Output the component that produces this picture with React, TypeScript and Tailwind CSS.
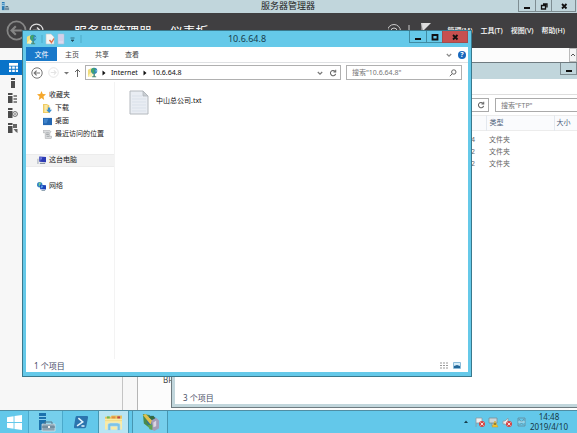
import type { ReactNode } from "react";

const uiFont = "font-['Noto_Sans','Noto_Sans_CJK_SC',sans-serif]";

type GlyphKind = "min" | "max" | "restore" | "close";

function WindowGlyph({ kind }: { kind: GlyphKind }) {
  return (
    <svg viewBox="0 0 10 10" className="h-[10px] w-[10px]" fill="none" stroke="#111" strokeWidth="1.8">
      {kind === "min" && <path d="M2 7H8" strokeWidth="2" />}
      {kind === "max" && <path d="M2.5 3H7.5V7.5H2.5Z" />}
      {kind === "restore" && <path d="M2.5 4.5H6.5V8H2.5ZM4 3H8V6.5" strokeWidth="1.3" />}
      {kind === "close" && <path d="M3 3L7.5 7.5M7.5 3L3 7.5" />}
    </svg>
  );
}

function WindowButton({ kind, label, className }: { kind: GlyphKind; label: string; className: string }) {
  return (
    <button type="button" aria-label={label} className={`flex items-center justify-center border border-t-0 ${className}`}>
      <WindowGlyph kind={kind} />
    </button>
  );
}

function NetIcon() {
  return (
    <svg viewBox="0 0 12 12" className="h-[11px] w-[11px] shrink-0">
      <path d="M1 3L5 1L6 5L4 9L1 11Z" fill="#f0dd7c" />
      <path d="M1 10L4 6L7 7L5 11Z" fill="#faf2b4" />
      <circle cx="7.8" cy="4.2" r="3.4" fill="#2d86b0" />
      <path d="M4.6 3L7 .9L9 2.4L7.4 4.4L8.4 6.6L6 7.2Z" fill="#43a668" />
      <path d="M9.4 2.8L11 4.2L9.6 5.8Z" fill="#8ed0ef" />
      <path d="M7 7.6H8.6V10H10V11.2H5.6V10H7Z" fill="#4d8a74" />
    </svg>
  );
}

function ArrowCircle({ className, color }: { className: string; color: string }) {
  return (
    <svg viewBox="0 0 12 12" className={className} fill="none" stroke={color} strokeWidth="1">
      <circle cx="6" cy="6" r="5.2" />
      <path d="M9 6H3.2M5.6 3.6L3.2 6L5.6 8.4" strokeWidth="1.2" />
    </svg>
  );
}

function RefreshIcon() {
  return (
    <svg viewBox="0 0 10 10" className="h-[8px] w-[8px]" fill="none" stroke="#666" strokeWidth="1.3">
      <path d="M7.6 3A3.3 3.3 0 1 0 8.3 6" />
      <path d="M8.4 .8V3.6H5.6" />
    </svg>
  );
}

function ChevronDown({ color = "#777" }: { color?: string }) {
  return (
    <svg viewBox="0 0 6 6" className="h-[6px] w-[6px]" fill="none" stroke={color} strokeWidth="1.2">
      <path d="M.8 2L3 4.2L5.2 2" />
    </svg>
  );
}

function TriangleRight() {
  return (
    <svg viewBox="0 0 4 6" className="h-[6px] w-[4px]"><path d="M.5 .6L3.5 3L.5 5.4Z" fill="#111" /></svg>
  );
}

function ServerIcon({ detail }: { detail: number }) {
  return (
    <svg viewBox="0 0 12 12" className="h-[12px] w-[12px]" fill="#4c4c4c">
      {detail === 0 && <path d="M4 1H8V3H4ZM4 4H8V11H4Z" />}
      {detail > 0 && <path d="M1 1H5.5V3H1ZM1 4H5.5V11H1Z" />}
      {detail === 1 && <path d="M6.5 3H10V5H6.5ZM6.5 6H10V8H6.5ZM6.5 9H10V11H6.5Z" fill="#888" />}
      {detail === 2 && <><circle cx="8" cy="7" r="2.4" fill="#f7f7f7" stroke="#666" /><circle cx="8" cy="7" r=".8" /></>}
      {detail === 3 && <path d="M6 2H10V6H6ZM6.5 7H10.5V11L8.5 9.5Z" fill="#666" />}
    </svg>
  );
}

function ManagerHeader() {
  return (
    <>
      <header className="flex h-[13px] shrink-0 bg-[#c1d6dc] text-[9px] leading-[12px] text-[#222]">
        <div className="flex-1">
          <svg viewBox="0 0 10 10" className="mt-[2px] ml-[1px] h-[9px] w-[9px]">
            <path d="M1 0H4V9H1Z" fill="#287bb5" /><path d="M1 2H4M1 4H4" stroke="#b9def2" />
            <path d="M4 6H9V9H4Z" fill="#7590a0" /><path d="M5 5H8" stroke="#436479" />
          </svg>
        </div>
        <h1>服务器管理器</h1>
        <div className="flex flex-1 justify-end pr-[1px]">
          <WindowButton kind="min" label="最小化" className="h-[12px] w-[17px] border-r-0 border-[#7e8d92]" />
          <WindowButton kind="restore" label="还原" className="h-[12px] w-[16px] border-r-0 border-[#7e8d92]" />
          <WindowButton kind="close" label="关闭" className="h-[12px] w-[25px] border-[#7e8d92]" />
        </div>
      </header>
      <div className="flex h-[35px] shrink-0 items-center bg-[#403f41] pl-[6px] text-white">
        <ArrowCircle className="h-[21px] w-[21px]" color="#858585" />
        <ArrowCircle className="ml-[2px] h-[15px] w-[15px] rotate-180" color="#ddd" />
        <span className="ml-[3px] h-[2px] w-[5px] bg-[#ddd]" />
        <h2 className="ml-[22px] flex flex-1 gap-[7px] text-[13px] leading-[16px] whitespace-nowrap">
          <span>服务器管理器</span><span>·</span><span>仪表板</span>
        </h2>
        <svg viewBox="0 0 48 16" className="mr-[12px] h-[16px] w-[48px]" fill="none" stroke="#ccc">
          <circle cx="6" cy="8" r="6.5" /><path d="M3 8A3 3 0 0 1 9 8M21 2V14" />
          <path d="M33 0H43L35 8Z" fill="#ddd" stroke="none" /><path d="M34 0V15" />
        </svg>
        <nav className="flex gap-[8px] pr-[12px] text-[7px] leading-[12px] font-medium whitespace-nowrap">
          <button type="button">管理(M)</button>
          <button type="button">工具(T)</button>
          <button type="button">视图(V)</button>
          <button type="button">帮助(H)</button>
        </nav>
      </div>
    </>
  );
}

function ManagerBody() {
  return (
    <main className="flex min-h-0 flex-1 bg-white">
      <nav className="flex w-[123px] shrink-0 flex-col items-start border-r border-[#c4c4c4] bg-[#f7f7f7] pt-[12px]">
        <button type="button" aria-label="仪表板" className="flex h-[15px] w-[22px] items-center justify-center bg-[#0873c9] pl-[4px]">
          <svg viewBox="0 0 10 10" className="h-[9px] w-[9px]" fill="white">
            <path d="M0 0H10V3H0ZM0 4H2.5V6.5H0ZM3.5 4H6.5V6.5H3.5ZM7.5 4H10V6.5H7.5ZM0 7.5H2.5V10H0ZM3.5 7.5H6.5V10H3.5ZM7.5 7.5H10V10H7.5Z" />
          </svg>
        </button>
        {["本地服务器", "所有服务器", "文件服务", "IIS"].map((name, i) => (
          <button key={name} type="button" aria-label={name} className="flex h-[15px] w-[26px] items-center justify-center"><ServerIcon detail={i} /></button>
        ))}
      </nav>
      <div className="w-[15px] shrink-0 border-r border-[#b5b5b5] bg-[#f7f7f7]" />
      <div className="flex flex-1 flex-col justify-end bg-[#fcfcfc] pb-[22px] pl-[25px] text-[8px] leading-[16px] text-[#444]">BPA 结果</div>
      <div className="h-[14px] w-[8px] border border-[#bbb] bg-[#f5f5f5] pt-[3px]">
        <svg viewBox="0 0 6 6" className="h-[6px] w-[6px]" fill="none" stroke="#555"><path d="M1 4L3 2L5 4" /></svg>
      </div>
    </main>
  );
}

function FtpWindow() {
  return (
    <section aria-label="FTP" className="absolute top-[62px] right-[-80px] bottom-[25px] left-[171px] flex flex-col border border-[#6f7b80] bg-[#c1d6dc] px-[3px] pb-[3px] text-[7px]">
      <div className="flex h-[16px] shrink-0 justify-end pr-[76px]">
        <WindowButton kind="min" label="最小化" className="h-[12px] w-[17px] border-[#7e8d92]" />
      </div>
      <div className="flex min-h-0 flex-1 flex-col bg-white pr-[76px]">
        <div className="h-[16px] shrink-0 border-b border-[#dedede]" />
        <div className="flex h-[20px] shrink-0 items-center gap-[6px]">
          <div className="flex h-[14px] flex-1 items-center justify-end gap-[6px] border border-[#aaa] pr-[3px]">
            <ChevronDown />
            <RefreshIcon />
          </div>
          <input aria-label="搜索FTP" placeholder='搜索"FTP"' className="h-[14px] w-[82px] border border-r-0 border-[#aaa] pl-[5px] leading-[12px] outline-none placeholder:text-[#777]" />
        </div>
        <table className="w-full table-fixed border-collapse text-left leading-[12px] text-[#666]">
          <thead>
            <tr className="h-[15px] border-y border-[#ececec] bg-[#fafbfd] text-[#4c607a]">
              <th className="p-0" />
              <th className="w-[68px] border-l border-[#e3e8ee] p-0 pl-[3px] font-normal">类型</th>
              <th className="w-[23px] border-l border-[#e3e8ee] p-0 pl-[2px] font-normal">大小</th>
            </tr>
          </thead>
          <tbody>
            <tr className="h-[3px]"><td /></tr>
            {[":04", ":12", ":12"].map((time, i) => (
              <tr key={i}>
                <td className="p-0 pr-[11px] text-right">2019/4/10 14{time}</td>
                <td className="p-0 pl-[3px]">文件夹</td>
                <td />
              </tr>
            ))}
          </tbody>
        </table>
        <div className="mt-auto pb-px pl-[8px] text-[8px] leading-[10px] text-[#4a4f66]">3 个项目</div>
      </div>
    </section>
  );
}

function TreeRow({ icon, children, className = "" }: { icon: ReactNode; children: ReactNode; className?: string }) {
  return (
    <button type="button" className={`flex h-[13px] w-full items-center gap-[3px] text-left whitespace-nowrap ${className}`}>
      <svg viewBox="0 0 10 10" className="h-[9px] w-[9px] shrink-0">{icon}</svg>
      {children}
    </button>
  );
}

function Sidebar() {
  return (
    <nav className="w-[89px] shrink-0 border-r border-[#f3f3f3] pt-[7px] text-[7px] text-[#222]">
      <TreeRow className="pl-[11px]" icon={<path d="M5 0L6.4 3.4L10 3.7L7.2 6L8 10L5 7.9L2 10L2.8 6L0 3.7L3.6 3.4Z" fill="#f5a72c" />}>收藏夹</TreeRow>
      <TreeRow className="pl-[17px]" icon={<><path d="M0 0H4L7 1.5V10H0Z" fill="#efca60" /><path d="M1.5 1H5V9H1.5Z" fill="#f9e8a6" /><path d="M5.5 4H8V6.5H10L7 10L3.6 6.5H5.5Z" fill="#3d8fce" /></>}>下载</TreeRow>
      <TreeRow className="pl-[17px]" icon={<><path d="M0 1H10V9H0Z" fill="#2467b2" /><path d="M1 2H6L4 7H1Z" fill="#3f83ca" /></>}>桌面</TreeRow>
      <TreeRow className="pl-[17px]" icon={<><path d="M0 .5H7.5L9 2L7.5 3V7H10L9 9.5H2.5V3H0Z" fill="#dadcde" stroke="#a5a8aa" strokeWidth=".6" /><path d="M3.5 3.2H6.5M3.5 5H6.5M4 7H7" stroke="#85898c" strokeWidth=".7" /></>}>最近访问的位置</TreeRow>
      <TreeRow className="mt-[13px] border-y border-[#ececec] bg-[#f3f3f3] pl-[11px]" icon={<><path d="M2.5 .5L10 1V7L2.5 6.5Z" fill="#2c3ab4" /><path d="M3.5 1.5L6 1.7L4 5.6Z" fill="#7d88e8" /><path d="M0 3H2V9H0Z" fill="#c5cad1" /><path d="M3.5 7.5H9V9H3Z" fill="#8d98a7" /></>}>这台电脑</TreeRow>
      <TreeRow className="mt-[13px] pl-[11px]" icon={<><circle cx="3" cy="3" r="3" fill="#3183c8" /><path d="M2 1L4 0L4 3L2 5Z" fill="#79cd88" /><path d="M3.5 3L10 3.6V8.4L3.5 8Z" fill="#1d43b8" /><path d="M4.5 4L7 4.3L5.6 7H4.5Z" fill="#58a4ea" /><path d="M5 9H9V10H5Z" fill="#879cac" /></>}>网络</TreeRow>
    </nav>
  );
}

function ExplorerWindow() {
  return (
    <section aria-label="10.6.64.8" className="absolute top-[30px] right-[105px] bottom-[56px] left-[22px] flex flex-col border border-[#39798d] bg-[#65c9e9] px-[3px] pb-[4px] text-[7px] text-[#222]">
      <header className="flex h-[16px] shrink-0">
        <div className="flex flex-1 items-center">
          <NetIcon />
          <svg viewBox="0 0 44 12" className="ml-[4px] h-[12px] w-[44px]">
            <path d="M1 2V10M40 2V10" stroke="#4fabc8" />
            <path d="M5 1H10L13 4V11H5Z" fill="#f7f5f3" stroke="#b9c6ce" strokeWidth=".6" /><path d="M8.5 7L10.5 9.5L13 5.5" fill="none" stroke="#e0704c" strokeWidth="1.4" />
            <path d="M17 1H23V11H17Z" fill="#dbd9ef" stroke="#a9bdd5" strokeWidth=".6" /><path d="M18 3H22M18 5H22M18 7H22" stroke="#c5bfe0" strokeWidth=".7" />
            <path d="M29.5 5H33.5M30 7H33L31.5 8.6Z" fill="#234f60" stroke="#234f60" strokeWidth=".7" />
          </svg>
        </div>
        <h2 className="text-[9px] leading-[15px] text-[#173d4c]">10.6.64.8</h2>
        <div className="flex flex-1 justify-end">
          <WindowButton kind="min" label="最小化" className="h-[12px] w-[17px] border-r-0 border-[#408ca3]" />
          <WindowButton kind="max" label="最大化" className="h-[12px] w-[16px] border-r-0 border-[#408ca3]" />
          <WindowButton kind="close" label="关闭" className="h-[12px] w-[26px] border-[#a34d4d] bg-[#c75050]" />
        </div>
      </header>
      <div className="flex min-h-0 flex-1 flex-col bg-white">
        <div className="flex h-[16px] shrink-0 items-center border-b border-[#dfe1e3] leading-[14px] text-[#444]">
          <button type="button" className="h-[14px] w-[31px] self-start bg-[#1979ca] leading-[13px] text-white">文件</button>
          <button type="button" className="w-[30px]">主页</button>
          <button type="button" className="w-[30px]">共享</button>
          <button type="button" className="w-[30px]">查看</button>
          <div className="ml-auto flex items-center gap-[6px] pr-[2px]">
            <ChevronDown color="#888" />
            <button type="button" aria-label="帮助" className="h-[8px] w-[8px] rounded-full bg-[#1768bd] text-[7px] leading-[8px] font-bold text-white">?</button>
          </div>
        </div>
        <div className="flex h-[19px] shrink-0 items-center pr-[6px] pl-[5px]">
          <ArrowCircle className="h-[12px] w-[12px]" color="#777" />
          <ArrowCircle className="ml-[5px] h-[11px] w-[11px] rotate-180" color="#e4e4e4" />
          <svg viewBox="0 0 18 10" className="ml-[4px] h-[10px] w-[18px]" fill="none" stroke="#666"><path d="M1 4H6L3.5 6.5Z" fill="#777" stroke="none" /><path d="M14.5 9V1.5M12 4L14.5 1.5L17 4" /></svg>
          <div className="ml-[4px] flex h-[15px] flex-1 items-center border border-[#b0b0b0] pr-[3px] pl-[1px] text-[#111]">
            <NetIcon />
            <span className="ml-[4px] flex items-center gap-[5px] leading-[12px]">
              <TriangleRight />Internet<TriangleRight />10.6.64.8
            </span>
            <span className="ml-auto flex items-center gap-[6px]"><ChevronDown /><RefreshIcon /></span>
          </div>
          <label className="ml-[5px] flex h-[15px] w-[116px] items-center border border-[#b0b0b0] pr-[4px] pl-[5px]">
            <input aria-label="搜索" placeholder='搜索"10.6.64.8"' className="w-0 flex-1 leading-[12px] outline-none placeholder:text-[#777]" />
            <svg viewBox="0 0 8 8" className="h-[8px] w-[8px]" fill="none" stroke="#666"><circle cx="4.8" cy="3" r="2.2" /><path d="M3.2 4.8L.8 7.2" /></svg>
          </label>
        </div>
        <div className="flex min-h-0 flex-1">
          <Sidebar />
          <div className="pt-[8px] pl-[14px]">
            <button type="button" className="flex items-center gap-[7px] leading-[12px] text-[#111]">
              <svg viewBox="0 0 20 25" className="h-[25px] w-[20px]">
                <path d="M1 1H14L19 6V24H1Z" fill="#e9edf3" stroke="#b4b9be" />
                <path d="M14 1V6H19Z" fill="#c9ced3" stroke="#aeb3b8" strokeWidth=".7" />
                <path d="M3 6H13M3 9H17M3 12H17M3 15H17M3 18H17M3 21H17" stroke="#d6dde6" strokeWidth=".7" />
              </svg>
              <span className="pb-[4px]">中山总公司.txt</span>
            </button>
          </div>
        </div>
        <footer className="flex h-[13px] shrink-0 items-center pr-[7px] pl-[8px] text-[8px] leading-[12px] text-[#444a66]">
          1 个项目
          <svg viewBox="0 0 22 9" className="ml-auto h-[9px] w-[22px]" fill="none">
            <path d="M1 2H3M1 4.5H3M1 7H3M4 2H9M4 4.5H9M4 7H9" stroke="#999" strokeDasharray="2 1" />
            <path d="M14.5 1.5H21.5V7.5H14.5Z" fill="#d5edf9" stroke="#8abbd9" /><path d="M15 5L18 4L21 5V7H15Z" fill="#236799" />
          </svg>
        </footer>
      </div>
    </section>
  );
}

function TaskButton({ label, className, children }: { label: string; className: string; children: ReactNode }) {
  return <button type="button" aria-label={label} className={`flex items-center justify-center ${className}`}>{children}</button>;
}

function Taskbar() {
  return (
    <footer className="relative flex h-[23px] shrink-0 border-t border-[#4f8da3] bg-[#63c8ea]">
      <TaskButton label="开始" className="w-[29px] border-r border-[#4ba9cb]">
        <svg viewBox="0 0 16 16" className="h-[15px] w-[15px]" fill="white"><path d="M0 2.4L7 1.3V7.5H0ZM8 1.1L16 0V7.5H8ZM0 8.5H7V14.7L0 13.6ZM8 8.5H16V16L8 14.9Z" /></svg>
      </TaskButton>
      <TaskButton label="服务器管理器" className="w-[34px] border-r border-[#4ba9cb] bg-[#76cfec]">
        <svg viewBox="0 0 20 20" className="h-[20px] w-[20px]">
          <path d="M3 1H10V18H3Z" fill="#1c72ad" /><path d="M3 4.5H10M3 7.5H10" stroke="#89ceec" />
          <path d="M6 12H19V19H6Z" fill="#8ba3b3" stroke="#dce8ee" strokeWidth=".7" /><path d="M9 12V10H16V12M6 15H19" fill="none" stroke="#5b788a" /><path d="M12 14H14V16H12Z" fill="#eee" />
        </svg>
      </TaskButton>
      <TaskButton label="PowerShell" className="w-[35px]">
        <svg viewBox="0 0 18 16" className="h-[14px] w-[16px]"><path d="M4 1H16Q17.5 1 17 3L15 13Q14.7 15 13 15H2Q.6 15 1 13L2.6 3Q3 1 4 1Z" fill="#2b74ae" /><path d="M6 3.5L11 8L4.5 12.5M9.5 12.5H13" fill="none" stroke="#e3f3fb" strokeWidth="1.8" /></svg>
      </TaskButton>
      <TaskButton label="文件资源管理器" className="w-[31px] border-x border-[#4696b1] bg-[#b9e5f3]">
        <svg viewBox="0 0 20 18" className="h-[17px] w-[19px]">
          <path d="M1 3H7L8 1.5H19V16H1Z" fill="#e9c465" /><path d="M3 2.5H6V5H3Z" fill="#6eb74f" /><path d="M8 2.5H12V5H8Z" fill="#e0913f" /><path d="M14 2.5H17V5H14Z" fill="#bd4844" />
          <path d="M1 5H19V16.5H1Z" fill="#f9eba6" /><path d="M1 7H19" stroke="#f1d984" />
          <path d="M4 17.5V11.5Q4 9.5 7 9.5H14Q17 9.5 17 11.5V17.5H14V13H7V17.5Z" fill="#7cc3e8" stroke="#c9e8f6" strokeWidth=".6" />
        </svg>
      </TaskButton>
      <TaskButton label="IIS 管理器" className="ml-[3px] w-[36px] border-x border-[#4696b1] bg-[#76cfec]">
        <svg viewBox="0 0 20 20" className="h-[19px] w-[19px]">
          <path d="M2 1L9 2L12 6L8 15L3 11Z" fill="#4a8a4c" /><circle cx="11" cy="8" r="5" fill="#2d6f9c" /><path d="M2 2L5 1L12 8L10 12Z" fill="#dfc04c" /><path d="M8 4L13 3L15 6L11 7Z" fill="#356a3f" />
          <path d="M11 8L16 5L19 8V16L14 19L11 17Z" fill="#a39db8" /><path d="M13 10L16 8V14L13 15Z" fill="#dcd5e4" /><path d="M7 13L12 12L12 18L9 17Z" fill="#5fa350" />
        </svg>
      </TaskButton>
      <div className="ml-auto flex items-center gap-[4px] pr-[9px]">
        <svg viewBox="0 0 64 12" className="h-[12px] w-[64px]" fill="none" strokeWidth=".8">
          <path d="M2 7L4 4.5L6 7Z" fill="#163c4b" />
          <path d="M14 2V11M14 2H20V7H14" fill="#eee" stroke="#8d9ba2" /><circle cx="20" cy="8" r="3" fill="#d54544" /><path d="M18.5 6.5L21.5 9.5M21.5 6.5L18.5 9.5" stroke="white" />
          <path d="M27 2H35V7H27ZM30 7V10H33" fill="#cad5d9" stroke="#7c8d95" /><path d="M33 5L36 11H30Z" fill="#f4c432" stroke="#c09a30" strokeWidth=".5" /><path d="M33 7V9" stroke="#222" />
          <path d="M41 5H43L46 2V10L43 8H41Z" fill="#eee" stroke="#8d9ba2" /><circle cx="47" cy="8" r="3" fill="#d54544" /><path d="M45.5 6.5L48.5 9.5M48.5 6.5L45.5 9.5" stroke="white" />
          <path d="M56 2H63V10H56ZM57 3L59.5 6L62 3M57.5 9L59.5 7L61.5 9" stroke="#66899a" /><path d="M56 6H63" stroke="#d8e4e8" />
        </svg>
        <time className="text-center text-[8px] leading-[10px] text-[#153744]">14:48<br />2019/4/10</time>
      </div>
    </footer>
  );
}

export default function App() {
  return (
    <div className={`relative flex h-screen flex-col overflow-hidden bg-white ${uiFont}`}>
      <ManagerHeader />
      <ManagerBody />
      <FtpWindow />
      <ExplorerWindow />
      <Taskbar />
    </div>
  );
}
